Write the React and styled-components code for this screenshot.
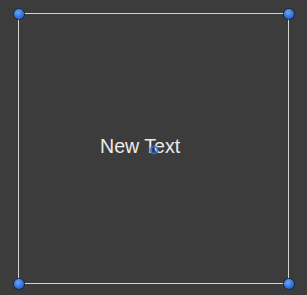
import React from "react";
import styled, { createGlobalStyle } from "styled-components";

const Global = createGlobalStyle`
  html, body { margin: 0; padding: 0; background: #3c3c3c; }
  body { width: 307px; height: 295px; overflow: hidden; font-family: "Liberation Sans", Arial, sans-serif; }
`;

const Canvas = styled.div`
  position: relative;
  width: 307px;
  height: 295px;
  background: #3c3c3c;
`;

const Frame = styled.div`
  position: absolute;
  left: 18px;
  top: 13px;
  width: 271px;
  height: 271px;
  box-sizing: border-box;
  border: 1px solid #d4d4d4;
`;

const Handle = styled.div`
  position: absolute;
  width: 10px;
  height: 10px;
  border-radius: 50%;
  background: radial-gradient(circle at 40% 35%, #6aa4f7 0%, #2f6fdc 60%, #1f4fa8 100%);
  box-shadow: 0 0 0 1px #1b2a44;
  left: ${(p) => p.$x}px;
  top: ${(p) => p.$y}px;
  transform: translate(-50%, -50%);
`;

const Label = styled.div`
  position: absolute;
  left: 100px;
  top: 134px;
  color: #ececec;
  font-size: 19.6px;
  line-height: 24px;
  white-space: nowrap;
`;

const Pivot = styled.div`
  position: absolute;
  left: 154px;
  top: 150px;
  width: 9px;
  height: 9px;
  border-radius: 50%;
  box-sizing: border-box;
  border: 2px solid rgba(50, 110, 215, 0.8);
  transform: translate(-50%, -50%);
`;

export default function App() {
  return (
    <>
      <Global />
      <Canvas>
        <Frame />
        <Label>New Text</Label>
        <Pivot />
        <Handle $x={18.5} $y={13.5} />
        <Handle $x={288.5} $y={13.5} />
        <Handle $x={18.5} $y={283.5} />
        <Handle $x={288.5} $y={283.5} />
      </Canvas>
    </>
  );
}
